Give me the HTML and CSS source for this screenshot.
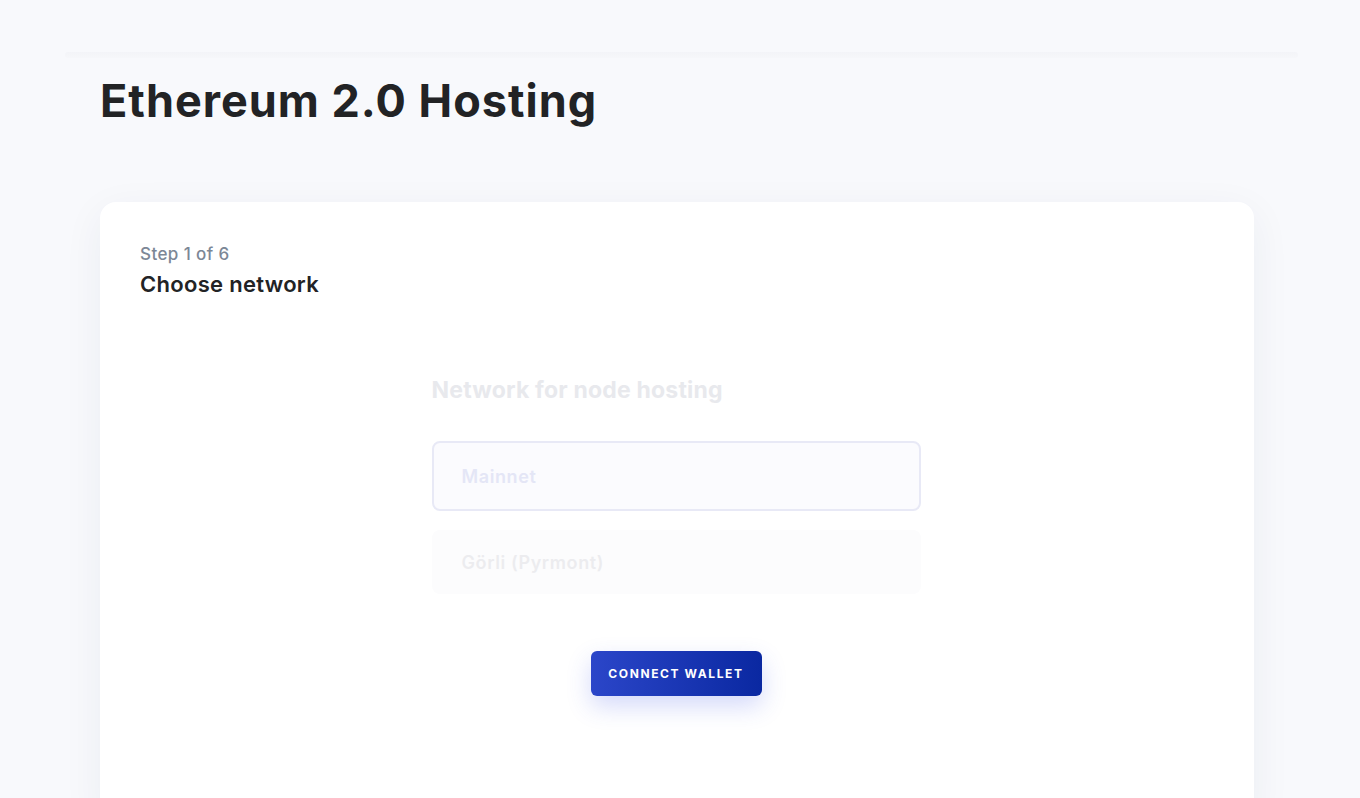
FILE: index.html
```html
<!DOCTYPE html>
<html lang="en">
<head>
<meta charset="utf-8">
<title>Ethereum 2.0 Hosting</title>
<link rel="stylesheet" href="styles.css">
</head>
<body>
<div class="page">
  <div class="topbar"></div>
  <h1 class="title">Ethereum 2.0 Hosting</h1>
  <section class="card">
    <div class="step">Step 1 of 6</div>
    <h2 class="step-title">Choose network</h2>
    <div class="form">
      <h3 class="form-label">Network for node hosting</h3>
      <div class="option option-selected">Mainnet</div>
      <div class="option">Görli (Pyrmont)</div>
      <div class="actions">
        <button class="btn">CONNECT WALLET</button>
      </div>
    </div>
  </section>
</div>
</body>
</html>
```
FILE: styles.css
```css
* { box-sizing: border-box; }
html, body { margin: 0; padding: 0; }
body {
  background: #f8f9fc;
  font-family: Inter, "Noto Sans", sans-serif;
  color: #222325;
  height: 798px;
  overflow: hidden;
}
.page {
  padding-top: 52px;
}
.topbar {
  margin: 0 62px 0 65px;
  height: 6px;
  background: linear-gradient(180deg, #f3f4f8 0%, #f6f7fa 100%);
  border-radius: 3px;
}
.title {
  margin: 15px 0 0 100px;
  font-size: 45px;
  font-weight: 700;
  letter-spacing: 1px;
  line-height: 56px;
  color: #222325;
}
.card {
  margin: 73px 106px 0 100px;
  background: #fff;
  border-radius: 16px;
  box-shadow: 0 10px 40px rgba(40, 50, 90, 0.06);
  padding: 41px 40px 100px;
  min-height: 620px;
}
.step {
  font-size: 17px;
  font-weight: 500;
  letter-spacing: 0.4px;
  color: #7c8796;
  line-height: 22px;
}
.step-title {
  margin: 6px 0 0;
  font-size: 22px;
  font-weight: 600;
  letter-spacing: 0.3px;
  line-height: 26px;
  color: #222325;
}
.form {
  width: 489px;
  margin: 80px auto 0;
  position: relative;
  left: -1px;
}
.form-label {
  margin: 0 0 38px;
  font-size: 23px;
  font-weight: 700;
  letter-spacing: 0.2px;
  line-height: 26px;
  color: #e8e9ed;
}
.option {
  height: 64px;
  border-radius: 8px;
  padding: 0 30px;
  display: flex;
  align-items: center;
  font-size: 18px;
  font-weight: 600;
  letter-spacing: 0.6px;
  color: #ececef;
  background: #fcfcfd;
  margin-bottom: 19px;
}
.option-selected {
  height: 70px;
  border: 2px solid #e8e9f6;
  background: #fbfbfe;
  color: #e4e6f6;
  padding: 0 28px;
  margin-bottom: 19px;
}
.actions {
  display: flex;
  justify-content: center;
  margin-top: 57px;
}
.btn {
  width: 171px;
  height: 45px;
  border: none;
  border-radius: 6px;
  background: linear-gradient(90deg, #2b46c9 0%, #0a28a1 100%);
  color: #fff;
  font-family: Inter, sans-serif;
  font-size: 12px;
  font-weight: 700;
  letter-spacing: 1.6px;
  box-shadow: 0 10px 24px rgba(60, 80, 230, 0.22);
}
```
